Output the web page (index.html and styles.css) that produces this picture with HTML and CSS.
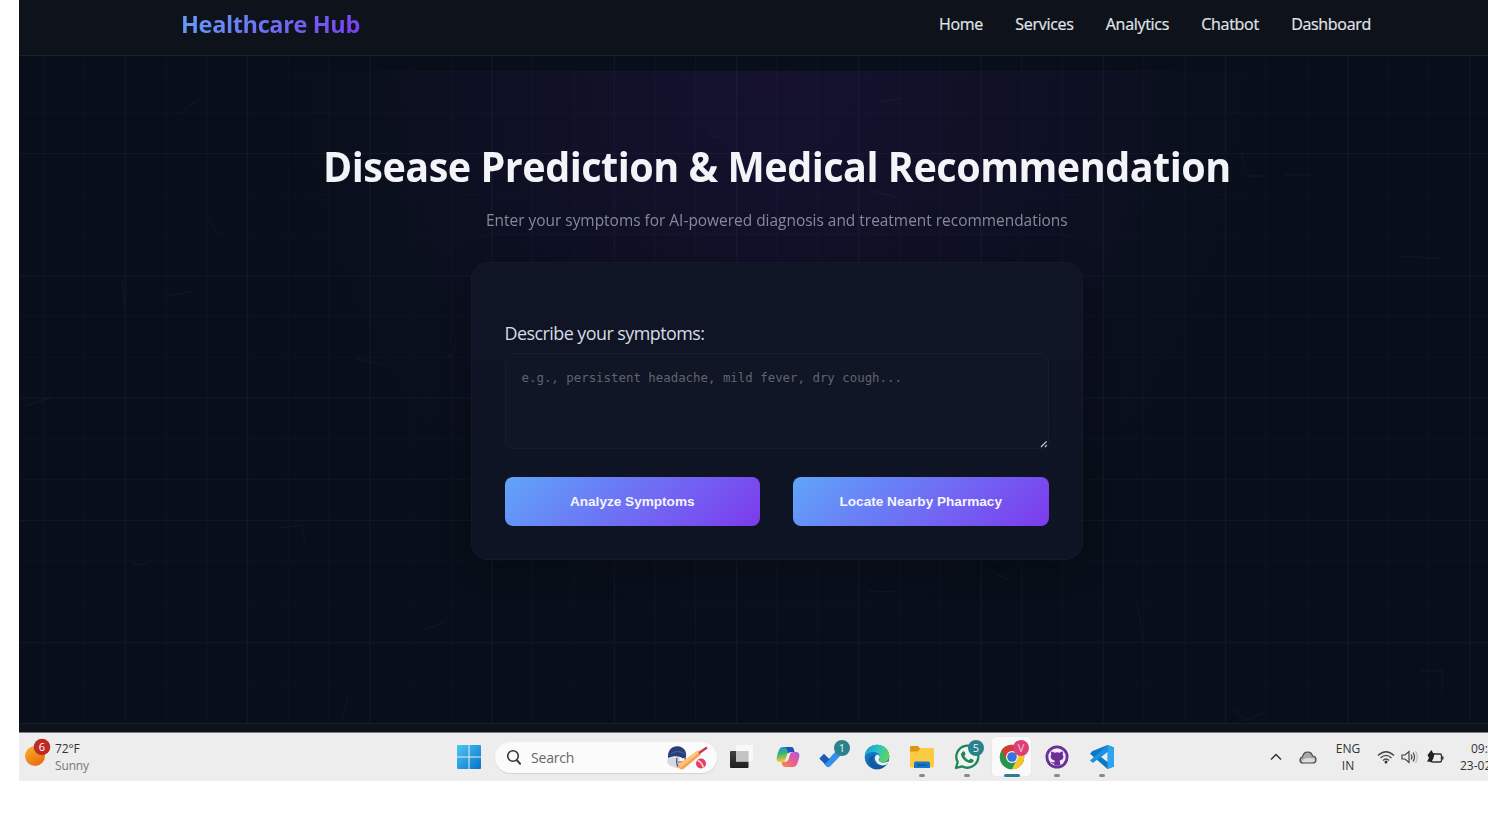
FILE: index.html
```html
<!DOCTYPE html>
<html lang="en">
<head>
<meta charset="utf-8">
<title>Healthcare Hub</title>
<link rel="stylesheet" href="styles.css">
</head>
<body>
<div class="screen">
  <header class="nav">
    <div class="logo">Healthcare Hub</div>
    <nav class="links">
      <a>Home</a><a>Services</a><a>Analytics</a><a>Chatbot</a><a>Dashboard</a>
    </nav>
  </header>
  <main class="hero">
    <svg class="backdrop" width="1469" height="667" viewBox="19 56 1469 667" aria-hidden="true">
      <defs>
        <pattern id="minor" x="43" y="71.5" width="40.75" height="40.75" patternUnits="userSpaceOnUse"><path d="M.5 0V40.75M0 .5H40.75" stroke="#6482b4" stroke-opacity=".042"/></pattern>
        <pattern id="major" x="2.5" y="31" width="122.25" height="122.25" patternUnits="userSpaceOnUse"><path d="M.5 0V122.25M0 .5H122.25" stroke="#6482b4" stroke-opacity=".045"/></pattern>
      </defs>
      <rect x="19" y="56" width="1469" height="667" fill="url(#minor)"/>
      <rect x="19" y="56" width="1469" height="667" fill="url(#major)"/>
      <g fill="none" stroke="#8ca0b4" stroke-opacity=".05" stroke-width="1.4">
        <path d="M178 114L201 98M209 218L218 235M167 296L195 291M122 280L125 309M26 406L52 397M357 359L382 365M455 342Q456 355 447 357M280 528L301 525L305 543M133 564Q145 566 153 560M348 697Q345 710 342 718M1400 256L1443 259M1139 612L1143 642M1233 708L1245 721L1263 713M1420 671H1442V693M1242 154L1245 170M1247 176H1264M1285 175H1312M868 189L898 198M880 102L901 98M707 130Q718 142 727 134M868 591L899 592M991 571L1010 580M423 630L445 622"/>
      </g>
    </svg>
    <h1 class="title">Disease Prediction &amp; Medical Recommendation</h1>
    <p class="subtitle">Enter your symptoms for AI-powered diagnosis and treatment recommendations</p>
    <section class="card">
      <label class="label" for="symptoms">Describe your symptoms:</label>
      <div class="field">
        <textarea id="symptoms" class="symptoms" placeholder="e.g., persistent headache, mild fever, dry cough..."></textarea>
        <svg class="grip" width="8" height="8" viewBox="0 0 8 8"><path d="M1 7L6.6 1.4M5 7L6.8 5.2" stroke="#c9ccd2" stroke-width="1.2"/></svg>
      </div>
      <div class="actions">
        <button class="btn">Analyze Symptoms</button>
        <button class="btn">Locate Nearby Pharmacy</button>
      </div>
    </section>
  </main>
  <div class="page-footer"></div>
  <footer class="taskbar">
    <div class="weather">
      <svg width="28" height="32" viewBox="0 0 28 32">
        <defs><linearGradient id="sun" x1="0" y1="0" x2=".6" y2="1"><stop stop-color="#f6b52e"/><stop offset="1" stop-color="#ee6c10"/></linearGradient></defs>
        <circle cx="11" cy="18" r="10" fill="url(#sun)"/><circle cx="18" cy="9" r="8.3" fill="#bf2a24"/>
        <text x="18" y="12.8" class="badge-text">6</text>
      </svg>
      <div class="weather-text"><div class="temp">72°F</div><div class="sky">Sunny</div></div>
    </div>
    <div class="apps">
      <svg class="start" width="24" height="24" viewBox="0 0 24 24"><defs><linearGradient id="win" x1="0" y1="0" x2="1" y2="1" ><stop stop-color="#4cc8f3"/><stop offset="1" stop-color="#0672cb"/></linearGradient><mask id="panes"><path d="M0 0H11.5V11.5H0zM12.5 0H24V11.5H12.5zM0 12.5H11.5V24H0zM12.5 12.5H24V24H12.5z" fill="#fff"/></mask></defs><rect width="24" height="24" rx="1" fill="url(#win)" mask="url(#panes)"/></svg>
      <div class="search">
        <svg width="16" height="17" viewBox="0 0 16 17"><circle cx="7" cy="7" r="5.3" fill="none" stroke="#333" stroke-width="1.6"/><path d="M10.800 11.200L14 14.700" stroke="#333" stroke-width="2" stroke-linecap="round"/></svg>
        <span class="search-text">Search</span>
        <svg class="cricket" width="42" height="26" viewBox="0 0 42 26">
          <path d="M2.5 13C0 15 1 20 6 21.5L12 23.500 14 11z" fill="#d6d9e1"/>
          <path d="M2 11.5C2 5 6 1 11.5 1.2 17.500 1.500 21 6 20 12L17 13.500C13 10.500 8 10.500 2 13z" fill="#293e78"/><path d="M5 9Q11 4 19 9" stroke="#51669c" fill="none"/>
          <path d="M11 13Q10 18 12 22M19 12Q20 17 17 20M12 17H18" stroke="#434b65" stroke-width="1.200" fill="none"/>
          <path d="M12.500 19L32 5.500 35 9.500 18 23.500Q16 25 14 24L11.500 21.500Z" fill="#f4a24e"/><path d="M12.500 19.500L32 5.500 33.500 7.500 14.500 23z" fill="#ffc580"/>
          <path d="M33 8L41 2.500" stroke="#cc334b" stroke-width="2.400"/><circle cx="35" cy="18.500" r="5" fill="#e5405f"/><path d="M31.500 15.500Q36 17 37.500 22.500" stroke="#ffd3dc" stroke-width="1.500" fill="none"/>
        </svg>
      </div>
      <div class="app app-view"><svg width="26" height="26" viewBox="0 0 26 26"><defs><linearGradient id="tv" x1="0" y1="0" x2="0" y2="1"><stop stop-color="#444"/><stop offset="1" stop-color="#1d1d1d"/></linearGradient></defs><rect x="2" y="7" width="18.500" height="17" rx="1" fill="url(#tv)"/><rect x="8" y="1" width="17" height="16.500" rx="1" fill="#f8f8f8" fill-opacity=".92"/><rect x="8" y="7" width="12.500" height="10.500" fill="#c3c3c3"/></svg></div>
      <div class="app app-copilot"><svg width="24" height="22" viewBox="0 0 24 22">
        <defs><linearGradient id="ca" x1="0" y1="0" x2=".2" y2="1"><stop stop-color="#2589df"/><stop offset=".45" stop-color="#35b478"/><stop offset="1" stop-color="#f2cc2f"/></linearGradient><linearGradient id="cb" x1="1" y1="0" x2="0" y2="1"><stop stop-color="#a15be5"/><stop offset=".5" stop-color="#ed5b8c"/><stop offset="1" stop-color="#f78e45"/></linearGradient></defs>
        <path d="M7 1H15Q17 1 17.700 3L18.500 6H14.500Q12 6 11.300 8L9.300 14.500Q8.500 16 6.500 16H4Q1 16 .6 13 .5 10 3 4 4 1 7 1Z" fill="url(#ca)"/>
        <path d="M17 21H9Q7 21 6.300 19L5.500 16H8Q11.500 16 12.300 13.500L14 8Q14.700 6 17.500 6H20Q23 6 23.400 9 23.500 12 21 18 20 21 17 21Z" fill="url(#cb)"/><path d="M9 1H15Q17 1 17.700 3L18.500 6H15Q13 6 12 7.500Q12 3 9 1Z" fill="#244fc0"/><path d="M11.700 7.700L14.200 7.300 12.200 14 9.300 14.700z" fill="#ededed"/>
      </svg></div>
      <div class="app app-todo"><svg width="32" height="32" viewBox="0 0 32 32"><path d="M2.500 17.500L7 13 14.500 20.500 10.500 25.500z" fill="#1b60bd"/><path d="M7.500 22.500L19.500 9.500 24.500 13.500 13 25.500Q11 27 9.500 25.500L7 23z" fill="#3292e9"/><path d="M2.500 17.500L7 13 12.500 18.500 8 23z" fill="#1b5cb8"/></svg><span class="badge teal b-todo">1</span></div>
      <div class="app"><svg width="26" height="26" viewBox="0 0 26 26"><defs><linearGradient id="eg" x1="0" y1=".2" x2="1" y2=".5"><stop stop-color="#1a9ce0"/><stop offset=".55" stop-color="#2fc4bd"/><stop offset="1" stop-color="#62d456"/></linearGradient><linearGradient id="eb" x1="0" y1="0" x2=".8" y2="1"><stop stop-color="#168ede"/><stop offset="1" stop-color="#0c4b94"/></linearGradient></defs>
        <circle cx="13" cy="13" r="12.300" fill="url(#eb)"/><path d="M.8 12C1.500 5 6.500.7 13 .7 20.500.7 25.300 6 25.300 12 25.300 16 22.300 18.500 19 18.500 16 18.500 14.300 17.200 15.500 15.500 17 12 14.500 8 9.500 8 5.500 8 2 10 .8 12Z" fill="url(#eg)"/><path d="M10.500 11Q6 17 12 22 17 25 21 21.800 17 25.300 12 25.200 4 22 5 15 6 11.500 10.500 11Z" fill="#115aa5"/><path d="M13 10.500Q16.500 11 15.500 14.500 14 16 15.500 17.500 19 20 24.500 17.300 24.500 19 22.500 20.500 18 22.500 14 20 10 17 11 13 11.500 11 13 10.500Z" fill="#edf3f3"/></svg></div>
      <div class="app"><svg width="26" height="24" viewBox="0 0 26 24"><path d="M1 2Q1 1 2 1H9L11.500 4H24Q25 4 25 5V12H1z" fill="#d9980f"/><path d="M1 6.500H9L11.500 3H24Q25 3 25 4V21Q25 22.500 23.500 22.500H2.500Q1 22.500 1 21z" fill="#fdcb43"/><path d="M5 23V18Q5 16.500 6.500 16.500H19.500Q21 16.500 21 18V23z" fill="#1678c4"/><path d="M8 20H18" stroke="#0c579b" stroke-width="1.500"/></svg><i class="dot"></i></div>
      <div class="app"><svg width="28" height="28" viewBox="0 0 28 28"><path d="M3 25L4.700 19A11 11 0 1 1 9 23.300Z" fill="#edf5f0" stroke="#23845a" stroke-width="2.300" stroke-linejoin="round"/><path d="M9.700 8.500Q11 7.600 11.700 9L12.600 11.200 11.300 13Q13 16 16 17.200L17.600 15.500 20.300 16.800Q21 17.200 20.400 18.600 19 20.800 15.800 19.800 10.500 18 8.300 13 7.500 10.300 9.700 8.500Z" fill="#23845a"/></svg><span class="badge teal b-wa">5</span><i class="dot"></i></div>
      <div class="app"><span class="tile"></span><svg width="26" height="26" viewBox="0 0 26 26"><circle cx="13" cy="13" r="12.300" fill="#28964a"/><path d="M2.350 6.850A12.300 12.300 0 0 1 23.650 6.850L13 8.500 8 16z" fill="#d93b32"/><path d="M23.650 6.850A12.300 12.300 0 0 1 13 25.300L18 15 14 7z" fill="#f6c52c"/><circle cx="13" cy="13" r="6" fill="#eef3fb"/><circle cx="13" cy="13" r="4.800" fill="#3573df"/></svg><span class="badge pink b-chrome">V</span><i class="dot active"></i></div>
      <div class="app"><svg width="24" height="24" viewBox="0 0 24 24"><circle cx="12" cy="12" r="11.500" fill="#6c2e99"/><circle cx="12" cy="12" r="8.700" fill="#f2ebf7"/><path d="M6.500 6.300L9.500 7.700Q12 7 14.500 7.700L17.500 6.300Q18.300 8 17.700 9.500 20 14 14.500 15.700 15.300 16.700 15.300 20.500H9.300V18.700Q6.700 19 5.600 16.700 7.700 17.700 9.600 17.200L9.800 15.700Q4 14 6.300 9.500 5.700 8 6.500 6.300Z" fill="#6c2e99"/></svg><i class="dot"></i></div>
      <div class="app"><svg width="26" height="26" viewBox="0 0 26 26"><path d="M18.500 1L25 3.500V22.500L18.500 25 1 9.700 3.500 7z" fill="#0c78c5"/><path d="M18.500 1V8L3.800 19 1 16.500z" fill="#1d92de"/><path d="M18.500 1L25 3.500V22.500L18.500 25z" fill="#2ea4ef"/><path d="M18.500 8V18L12 13z" fill="#e4eef3"/></svg><i class="dot"></i></div>
    </div>
    <div class="tray">
      <svg width="12" height="8" viewBox="0 0 12 8"><path d="M1 6.500L6 1.500 11 6.500" stroke="#333" stroke-width="1.500" fill="none"/></svg>
      <svg class="t-cloud" width="18" height="13" viewBox="0 0 18 13"><path d="M4 12Q1 12 1 9 1 6.500 3.500 6 4.500 1 8.800 1 12.500 1 13.500 5 17 5.200 17 8.500 17 12 14 12Z" fill="#a9a9a9" stroke="#444" stroke-width="1.200"/><path d="M3 10.500Q4 7 9 7L15 7.500 16 9.500Q15 11.300 13 11.300H4Z" fill="#ddd"/></svg>
      <div class="lang"><div>ENG</div><div>IN</div></div>
      <svg class="t-wifi" width="18" height="14" viewBox="0 0 18 14"><g fill="none" stroke="#444" stroke-width="1.300"><path d="M1 5.500Q9-2 17 5.500M3.500 8Q9 2.700 14.500 8M6 10.500Q9 7.500 12 10.500"/></g><circle cx="9" cy="12" r="1.500" fill="#333"/></svg>
      <svg class="t-sound" width="18" height="14" viewBox="0 0 18 14"><g fill="none" stroke="#444" stroke-width="1.200"><path d="M1 5H4L8 1.500V12.500L4 9H1zM10 4.500Q12 7 10 9.500M12 2.500Q15 7 12 11.500"/><path d="M14.500 1Q18 7 14.500 13" stroke="#bbb"/></g></svg>
      <svg class="t-battery" width="18" height="15" viewBox="0 0 18 15"><rect x="5" y="4" width="10.500" height="8" rx="1.500" fill="none" stroke="#333" stroke-width="1.400"/><path d="M16.700 6.500V9.500" stroke="#333" stroke-width="1.600"/><path d="M1.500 5L5.500 0 7 3 8.500 3.500 7.500 8 5.500 12 1 11.500 3 8Z" fill="#222"/></svg>
      <div class="clock"><div class="time">09:</div><div>23-02</div></div>
    </div>
  </footer>
</div>
</body>
</html>
```

FILE: styles.css
```css
* { box-sizing: border-box; }

body {
  margin: 0;
  background: #fff;
  overflow: hidden;
  font-family: "Open Sans", "Noto Sans", sans-serif;
}

.screen {
  width: 1469px;
  height: 781px;
  margin-left: 19px;
  display: flex;
  flex-direction: column;
  background: #080f1a;
  overflow: hidden;
}

/* Navigation */
.nav {
  height: 56px;
  flex: none;
  display: flex;
  justify-content: space-between;
  align-items: flex-start;
  padding: 0 117px 0 162px;
  background: #0d121b;
  border-bottom: 1px solid #152030;
}

.logo {
  margin-top: 7px;
  font-size: 23.5px;
  line-height: 34px;
  font-weight: 700;
  letter-spacing: -.37px;
  white-space: nowrap;
  background: linear-gradient(135deg, #60a5fa, #7c3aed);
  background-clip: text;
  -webkit-background-clip: text;
  color: transparent;
}

.links {
  display: flex;
  gap: 32.300px;
  margin-top: 9px;
  font-size: 16px;
  line-height: 30px;
  letter-spacing: -.3px;
  color: #e3e5ea;
  -webkit-text-stroke: .2px #e3e5ea;
}

/* Hero */
.hero {
  position: relative;
  height: 667px;
  flex: none;
  padding: 82px 0 0 46px;
  display: flex;
  flex-direction: column;
  align-items: center;
}

.hero > * { position: relative; }

.hero .backdrop {
  position: absolute;
  left: 0;
  top: 0;
  background: radial-gradient(ellipse 490px 560px at 756px 0, #15112f, rgba(14, 15, 36, 0)) 0 15px no-repeat;
}

.title {
  margin: 0;
  height: 56px;
  font-size: 41.500px;
  line-height: 56px;
  font-weight: 700;
  letter-spacing: -.5px;
  color: #f3f4f8;
  white-space: nowrap;
  transform: scaleX(.952);
}

.subtitle {
  margin: 12px 0 0;
  height: 28px;
  font-size: 16.300px;
  line-height: 28px;
  color: #858a98;
  white-space: nowrap;
  transform: scaleX(.948);
}

.card {
  width: 612px;
  height: 298px;
  margin-top: 28px;
  padding: 55px 33px 0;
  border: 1px solid #141a2c;
  border-radius: 17px;
  background: linear-gradient(180deg, #101526, #0e1423);
  box-shadow: 0 8px 32px rgba(0, 0, 0, .3);
}

.label {
  display: block;
  height: 35px;
  font-size: 17.900px;
  line-height: 31px;
  letter-spacing: -.53px;
  color: #d8dbe2;
  white-space: nowrap;
}

.field { position: relative; height: 96px; }

.symptoms {
  display: block;
  width: 544px;
  height: 96px;
  padding: 15px 16px;
  border: 1px solid #171d31;
  border-radius: 8px;
  background: #101625;
  resize: none;
  font-family: "DejaVu Sans Mono", monospace;
  font-size: 12.400px;
  line-height: 18px;
}

.symptoms::placeholder { color: #60646c; opacity: 1; }

.grip { position: absolute; right: 1px; bottom: 1px; }

.actions {
  display: flex;
  gap: 33px;
  margin-top: 28px;
}

.btn {
  flex: 1;
  height: 49px;
  padding: 0;
  border: 0;
  border-radius: 8px;
  background: linear-gradient(135deg, #60a5fa, #7c3aed);
  color: #f5f5ff;
  font: bold 13.600px "Liberation Sans", Arial, sans-serif;
}

.page-footer {
  flex: none;
  height: 10px;
  background: #0d121c;
  border-top: 1px solid #151d29;
  border-bottom: 1px solid #777b82;
}

/* Taskbar */
.taskbar {
  height: 48px;
  flex: none;
  display: grid;
  grid-template-columns: 438px 813px 218px;
  background: #ededed;
  color: #333;
  white-space: nowrap;
}

.weather { display: flex; padding: 5px 0 0 5px; gap: 3px; }
.weather-text { font-size: 12px; line-height: 17px; padding-top: 2px; letter-spacing: -.15px; }
.temp { color: #333; }
.sky { color: #777; }

.badge-text {
  font: 11px "Open Sans", sans-serif;
  fill: #fff;
  text-anchor: middle;
}

.apps { display: flex; height: 48px; align-items: center; }
.start { flex: none; }

.search {
  width: 222px;
  height: 31px;
  margin: 1px 0 0 14px;
  padding: 0 9px 0 11px;
  display: flex;
  align-items: center;
  border-radius: 16px;
  background: #fbfbfb;
  box-shadow: 0 1px 1px #d4d4d4;
}

.search-text { margin-left: 9px; font-size: 14px; color: #666; letter-spacing: -.2px; }
.cricket { margin-left: auto; }

.app {
  position: relative;
  width: 45px;
  height: 48px;
  flex: none;
  display: flex;
  align-items: center;
  justify-content: center;
}

.app svg { position: relative; }
.app-view { width: 48px; }
.app-copilot { width: 46px; }
.app-todo { width: 43px; }

.tile {
  position: absolute;
  left: 3px;
  top: 4px;
  width: 39px;
  height: 39px;
  border-radius: 4px;
  background: #fafafa;
  box-shadow: 0 0 1px #ccc;
}

.badge {
  position: absolute;
  width: 16px;
  height: 16px;
  border-radius: 50%;
  color: #e9f5f5;
  font-size: 11px;
  line-height: 16px;
  text-align: center;
}

.teal { background: #2a818b; }
.pink { background: #dc3f78; color: #f9c2d5; }
.b-todo { left: 23px; top: 7px; }
.b-wa { left: 24px; top: 7px; }
.b-chrome { left: 24px; top: 7px; }

.dot {
  position: absolute;
  left: 20px;
  top: 41px;
  width: 6px;
  height: 3px;
  border-radius: 2px;
  background: #8a8a8a;
}

.dot.active { left: 15px; width: 16px; background: #2a818b; }

.tray {
  display: flex;
  align-items: center;
  overflow: hidden;
  font-size: 12px;
  line-height: 17px;
}

.tray > * { flex: none; }
.t-cloud { margin-left: 17px; }
.lang { margin-left: 18px; width: 26px; text-align: center; }
.t-wifi { margin-left: 16px; }
.t-sound { margin-left: 6px; }
.t-battery { margin-left: 7px; }
.clock { width: 62px; margin-left: 16px; }
.time { padding-left: 11px; }
```
